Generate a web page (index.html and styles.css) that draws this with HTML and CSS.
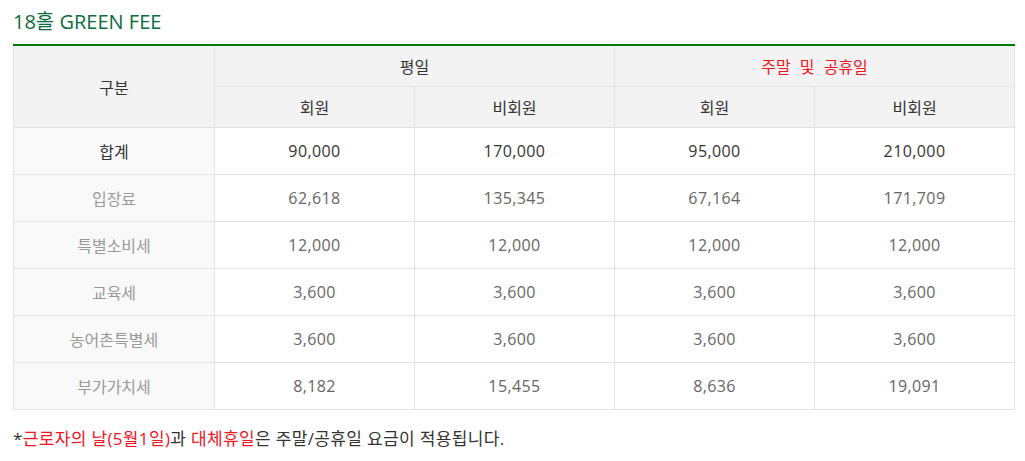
FILE: index.html
```html
<!DOCTYPE html>
<html lang="ko">
<head>
<meta charset="utf-8">
<link rel="stylesheet" href="styles.css">
</head>
<body>
<div class="wrap">
  <h2 class="title">18홀 GREEN FEE</h2>
  <table class="fee">
    <colgroup>
      <col class="c1"><col class="c"><col class="c"><col class="c"><col class="c">
    </colgroup>
    <thead>
      <tr class="h1">
        <th rowspan="2">구분</th>
        <th colspan="2">평일</th>
        <th colspan="2" class="red">주말 및 공휴일</th>
      </tr>
      <tr class="h2">
        <th>회원</th><th>비회원</th><th>회원</th><th>비회원</th>
      </tr>
    </thead>
    <tbody>
      <tr class="total"><th>합계</th><td>90,000</td><td>170,000</td><td>95,000</td><td>210,000</td></tr>
      <tr><th>입장료</th><td>62,618</td><td>135,345</td><td>67,164</td><td>171,709</td></tr>
      <tr><th>특별소비세</th><td>12,000</td><td>12,000</td><td>12,000</td><td>12,000</td></tr>
      <tr><th>교육세</th><td>3,600</td><td>3,600</td><td>3,600</td><td>3,600</td></tr>
      <tr><th>농어촌특별세</th><td>3,600</td><td>3,600</td><td>3,600</td><td>3,600</td></tr>
      <tr><th>부가가치세</th><td>8,182</td><td>15,455</td><td>8,636</td><td>19,091</td></tr>
    </tbody>
  </table>
  <p class="note">*<span class="red">근로자의 날(5월1일)</span>과 <span class="red">대체휴일</span>은 주말/공휴일 요금이 적용됩니다.</p>
</div>
</body>
</html>
```
FILE: styles.css
```css
html, body {
  margin: 0;
  padding: 0;
  background: #fff;
}
body {
  font-family: "Open Sans", "Noto Sans CJK KR", sans-serif;
  color: #333;
}
.wrap {
  padding: 0 10px 0 13px;
  width: 1002px;
}
.title {
  margin: 0;
  padding-top: 8px;
  height: 46px;
  box-sizing: border-box;
  font-size: 20px;
  line-height: 28px;
  font-weight: normal;
  color: #0b6b3c;
  border-bottom: 2px solid #007a00;
}
.fee {
  width: 1002px;
  table-layout: fixed;
  border-collapse: collapse;
  font-size: 16px;
}
.c1 { width: 201px; }
.c { width: 200px; }
.fee th, .fee td {
  border: 1px solid #e3e3e3;
  text-align: center;
  font-weight: normal;
  padding: 0;
}
.fee thead th {
  background: #f3f3f3;
  color: #333;
  word-spacing: 5px;
}
.fee thead tr:first-child th {
  border-top: none;
}
.h1 th { height: 40px; }
.h2 th { height: 40px; }
.fee tbody th {
  background: #f9f9f9;
  color: #999;
}
.fee tbody td {
  color: #666;
  height: 46px;
  letter-spacing: 0.4px;
}
.fee tbody tr.total th,
.fee tbody tr.total td {
  color: #333;
}
.red { color: #f0141e; }
.fee thead th.red { color: #f0141e; }
.note {
  margin: 17px 0 0 0;
  font-size: 17px;
  line-height: 24px;
  letter-spacing: 0.35px;
  color: #333;
}
```
